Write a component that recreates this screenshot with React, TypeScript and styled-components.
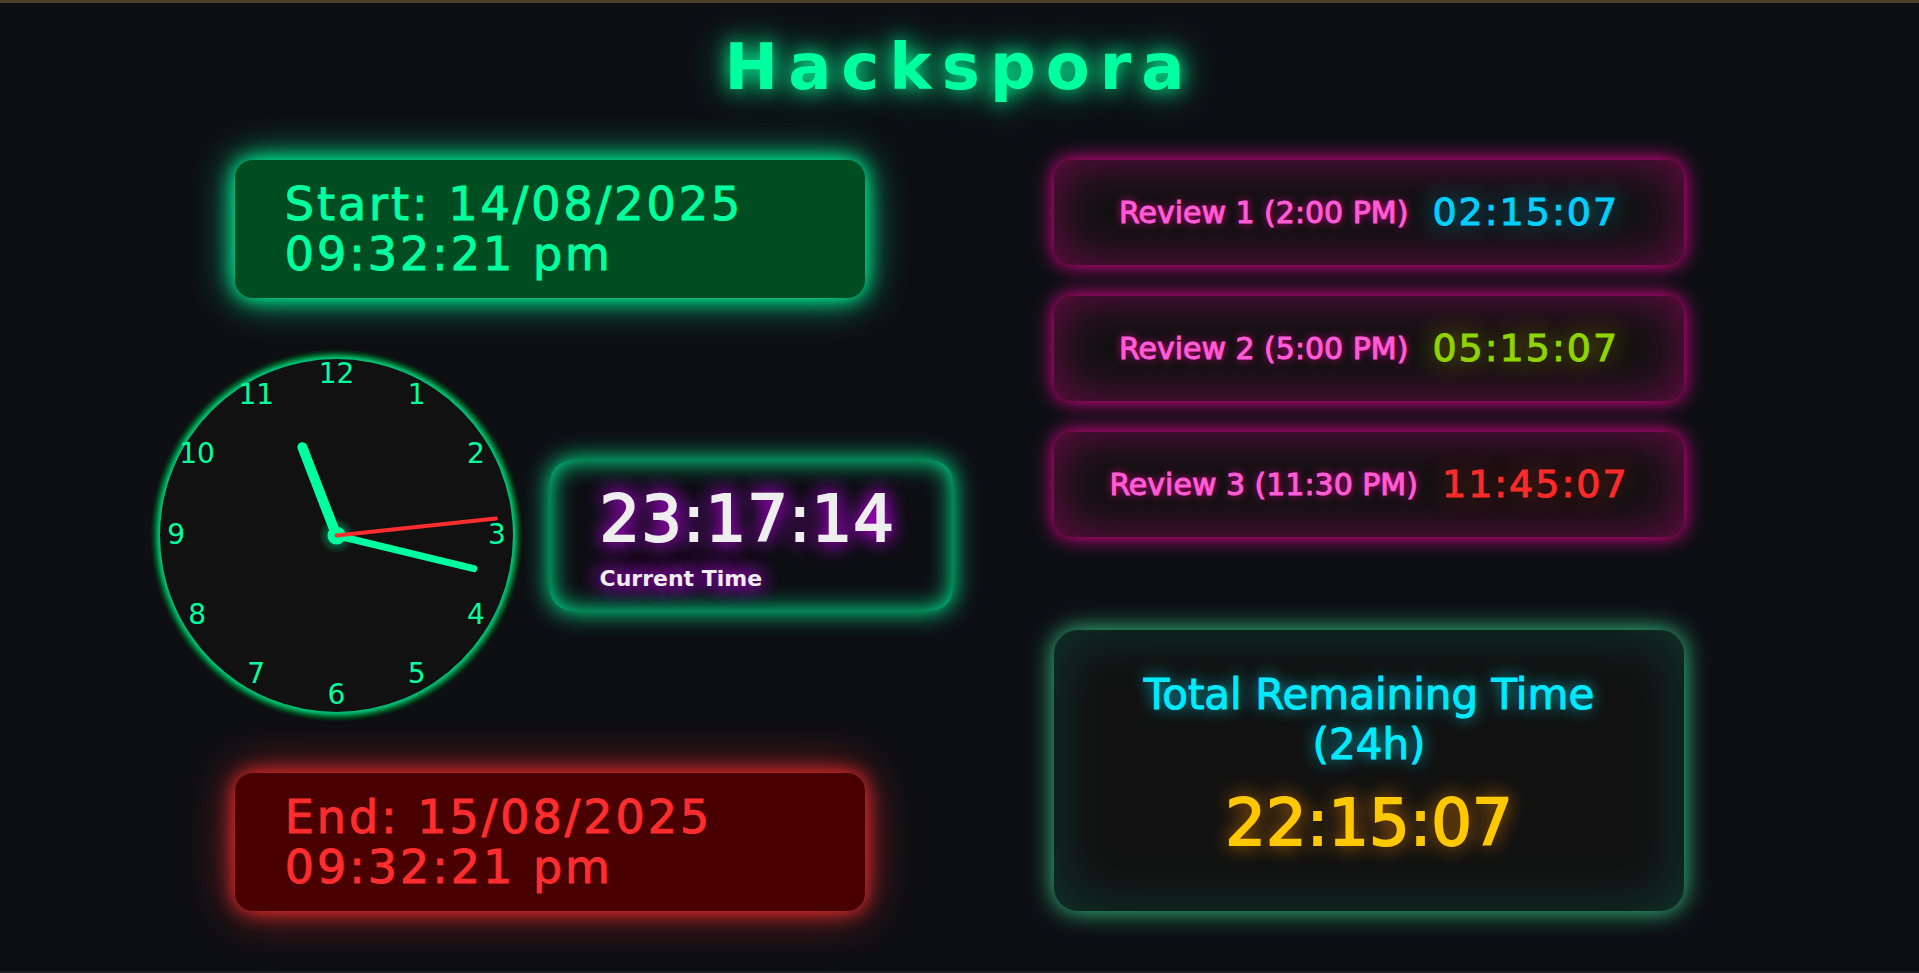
import React from "react";
import styled, { createGlobalStyle } from "styled-components";

const GlobalStyle = createGlobalStyle`
  * { box-sizing: border-box; }
  body {
    margin: 0;
    background: #0d0f13;
    font-family: "DejaVu Sans", Verdana, sans-serif;
  }
`;

const Page = styled.div`
  min-height: 100vh;
  border-top: 3px solid #4b4128;
  border-bottom: 2px solid #1c1d1f;
  padding: 24px 0 60px;
  overflow: hidden;
`;

const Title = styled.h1`
  margin: 0 0 53px;
  text-align: center;
  font-size: 64px;
  line-height: 80px;
  font-weight: 700;
  letter-spacing: 10px;
  color: #00ff9f;
  text-shadow: 0 0 20px #00ff9f, 0 0 40px rgba(0, 255, 159, 0.6);
`;

const Columns = styled.main`
  display: grid;
  grid-template-columns: 1fr 1fr;
  max-width: 1638px;
  margin: 0 auto;
`;

const Column = styled.div`
  display: flex;
  flex-direction: column;
  align-items: center;
  justify-content: space-between;
  gap: 57px;
`;

const DateCard = styled.section<{ $tone: "start" | "end" }>`
  width: 77%;
  padding: 19px 50px;
  border-radius: 18px;
  font-size: 46px;
  line-height: 50px;
  letter-spacing: 3px;
  -webkit-text-stroke: 1px currentColor;
  color: ${(p) => (p.$tone === "start" ? "#00ff9f" : "#ff2d2d")};
  background: ${(p) => (p.$tone === "start" ? "#004d22" : "#480000")};
  box-shadow: ${(p) =>
    p.$tone === "start"
      ? "0 0 20px #00ff9f, 0 0 40px rgba(0, 255, 159, 0.8)"
      : "0 0 20px #ff2d2d, 0 0 50px rgba(255, 45, 45, 0.6)"};
`;

const ClockRow = styled.div`
  display: flex;
  align-items: center;
  gap: 33px;
  padding-left: 8px;
`;

const Dial = styled.svg`
  display: block;
  flex: none;
  width: 361px;
  height: 361px;
  overflow: visible;
`;

const Numeral = styled.text`
  font-size: 28px;
  fill: #00ff9f;
  text-anchor: middle;
`;

const NowCard = styled.section`
  padding: 19px 50px 17px;
  width: 403px;
  border-radius: 22px;
  color: #eeeeee;
  box-shadow: 0 0 24px #00ff9f, inset 0 0 24px #00ff9f;
  text-shadow: 0 0 20px #c800f5, 0 0 20px #c800f5;
`;

const NowTime = styled.div`
  font-size: 64px;
  line-height: 80px;
  letter-spacing: 1px;
  -webkit-text-stroke: 2px currentColor;
`;

const NowLabel = styled.div`
  padding-top: 5px;
  font-size: 22px;
  line-height: 30px;
  font-weight: 700;
`;

const Reviews = styled.div`
  width: 77%;
  display: flex;
  flex-direction: column;
  gap: 31px;
`;

const ReviewCard = styled.section`
  display: flex;
  align-items: center;
  justify-content: center;
  gap: 24px;
  padding: 30px 24px;
  border-radius: 18px;
  background: #111111;
  box-shadow: 0 0 20px #ff00a0, inset 0 0 50px rgba(255, 0, 160, 0.38);
`;

const ReviewLabel = styled.span`
  font-size: 30px;
  line-height: 45px;
  color: #ff5cd6;
  -webkit-text-stroke: 1px currentColor;
  text-shadow: 0 0 8px #ff00a0;
`;

const ReviewTime = styled.span<{ $color: string; $glow: string }>`
  font-size: 38px;
  line-height: 45px;
  letter-spacing: 2px;
  color: ${(p) => p.$color};
  -webkit-text-stroke: 1px currentColor;
  text-shadow: 0 0 24px ${(p) => p.$glow};
`;

const TotalCard = styled.section`
  width: 77%;
  padding: 40px 50px 48px;
  border-radius: 24px;
  background: #111111;
  text-align: center;
  box-shadow: 0 0 24px rgba(61, 220, 151, 0.95), inset 0 0 60px rgba(0, 255, 200, 0.16);
`;

const TotalHeading = styled.h2`
  margin: 0 0 13px;
  font-size: 42px;
  line-height: 50px;
  font-weight: 400;
  color: #00eaff;
  -webkit-text-stroke: 1px currentColor;
  text-shadow: 0 0 16px rgba(0, 234, 255, 0.9);
`;

const TotalTime = styled.div`
  font-size: 64px;
  line-height: 80px;
  color: #ffc800;
  -webkit-text-stroke: 2px currentColor;
  text-shadow: 0 0 20px #ff8c00;
`;

const reviews = [
  { label: "Review 1 (2:00 PM)", time: "02:15:07", color: "#00cfff", glow: "rgba(0, 207, 255, 0.8)" },
  { label: "Review 2 (5:00 PM)", time: "05:15:07", color: "#8fd400", glow: "rgba(200, 180, 0, 0.9)" },
  { label: "Review 3 (11:30 PM)", time: "11:45:07", color: "#ff2a2a", glow: "rgba(255, 50, 30, 0.6)" },
];

const NUMERAL_RADIUS = 160;
const numerals = Array.from({ length: 12 }, (_, i) => {
  const angle = ((i + 1) * Math.PI) / 6;
  return {
    value: i + 1,
    x: Math.round(NUMERAL_RADIUS * Math.sin(angle)),
    y: Math.round(-NUMERAL_RADIUS * Math.cos(angle)) + 8,
  };
});

function Clock() {
  return (
    <Dial viewBox="-180 -180 360 360" role="img" aria-label="Analog clock">
      <defs>
        <radialGradient id="ring" gradientUnits="userSpaceOnUse" cx="0" cy="0" r="186">
          <stop offset="0.946" stopColor="#00c87d" />
          <stop offset="0.957" stopColor="#00a860" />
          <stop offset="0.97" stopColor="#006b35" />
          <stop offset="0.985" stopColor="#003316" />
          <stop offset="1" stopColor="#0d0f13" />
        </radialGradient>
        <radialGradient id="hub">
          <stop offset="0.3" stopColor="#00ff9f" stopOpacity="0.4" />
          <stop offset="1" stopColor="#00ff9f" stopOpacity="0" />
        </radialGradient>
      </defs>
      <circle r="186" fill="url(#ring)" />
      <circle r="176" fill="#111111" />
      {numerals.map((n) => (
        <Numeral key={n.value} x={n.x} y={n.y}>
          {n.value}
        </Numeral>
      ))}
      <circle r="18" fill="url(#hub)" />
      <circle r="9" fill="#00ff9f" />
      <g strokeLinecap="round">
        <line x2="-34" y2="-88" stroke="#00ff9f" strokeWidth="10" />
        <line x2="137" y2="33" stroke="#00ff9f" strokeWidth="7" />
        <line x2="159" y2="-17" stroke="#ff2d2d" strokeWidth="4" />
      </g>
    </Dial>
  );
}

export default function App() {
  return (
    <>
      <GlobalStyle />
      <Page>
        <Title>Hackspora</Title>
        <Columns>
          <Column>
            <DateCard $tone="start">Start: 14/08/2025 09:32:21 pm</DateCard>
            <ClockRow>
              <Clock />
              <NowCard>
                <NowTime>23:17:14</NowTime>
                <NowLabel>Current Time</NowLabel>
              </NowCard>
            </ClockRow>
            <DateCard $tone="end">End: 15/08/2025 09:32:21 pm</DateCard>
          </Column>
          <Column>
            <Reviews>
              {reviews.map((r) => (
                <ReviewCard key={r.label}>
                  <ReviewLabel>{r.label}</ReviewLabel>
                  <ReviewTime $color={r.color} $glow={r.glow}>
                    {r.time}
                  </ReviewTime>
                </ReviewCard>
              ))}
            </Reviews>
            <TotalCard>
              <TotalHeading>Total Remaining Time (24h)</TotalHeading>
              <TotalTime>22:15:07</TotalTime>
            </TotalCard>
          </Column>
        </Columns>
      </Page>
    </>
  );
}
